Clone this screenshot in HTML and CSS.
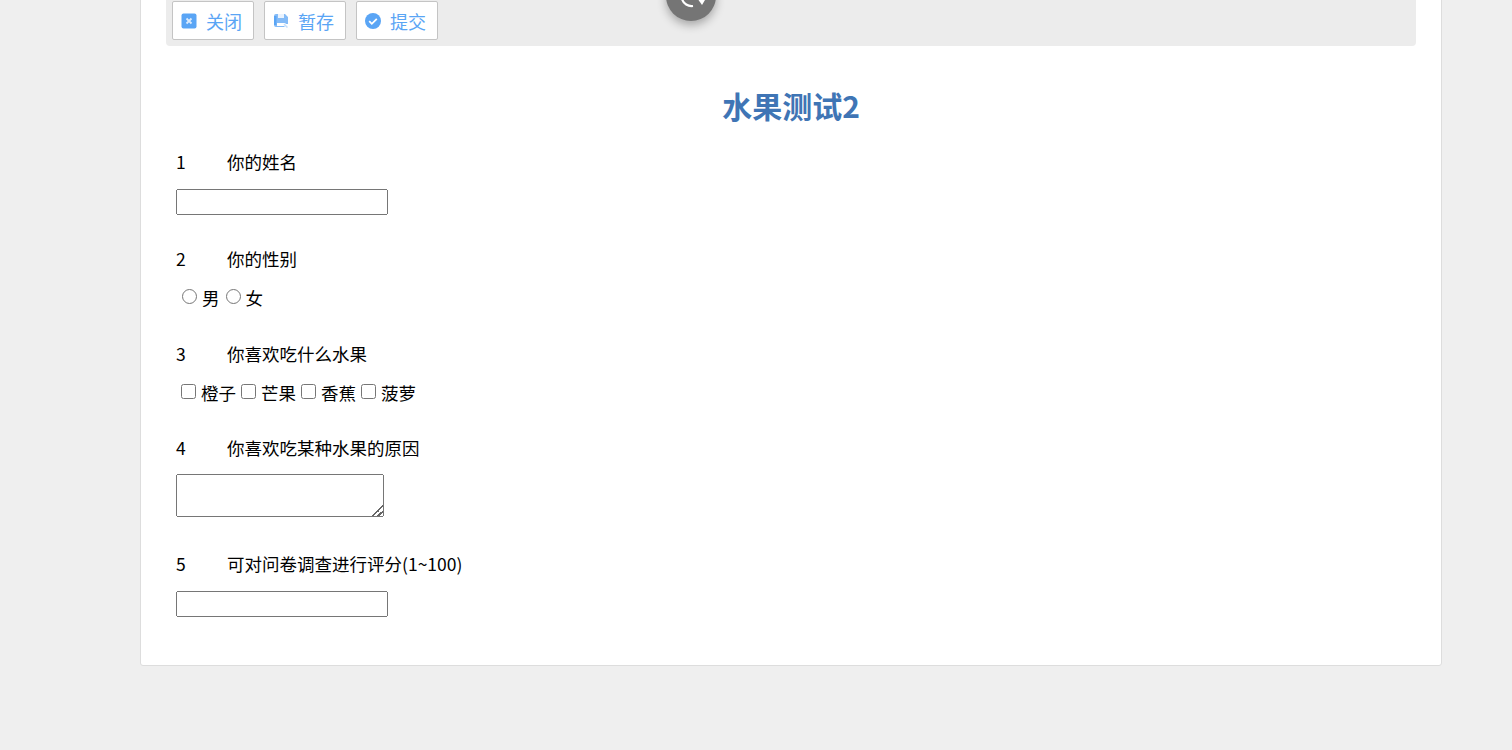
FILE: index.html
```html
<!DOCTYPE html>
<html>

<head>
  <title>水果测试2</title>
  <link rel="stylesheet" href="styles.css">
</head>

<body>
  <div class="formCard">
    <div class="toolbar">
      <button class="toolButton">
        <svg class="toolIcon" viewBox="0 0 16 16">
          <rect x="0.500" y="0.500" width="15" height="15" rx="2" fill="#5aa5f5" />
          <path d="M5.500 5.500l5 5M10.500 5.500l-5 5" stroke="#dcebfc" stroke-width="1.800" fill="none" />
        </svg>
        <span>关闭</span>
      </button>
      <button class="toolButton">
        <svg class="toolIcon" viewBox="0 0 16 16">
          <path d="M1 3a2 2 0 0 1 2-2h9l3 3v7h-2l-1-1H4v3h7l1 1H3a2 2 0 0 1-2-2z" fill="#84bbf7" />
          <rect x="5" y="1" width="6" height="4" fill="#eaf3fe" />
          <rect x="1" y="3" width="2.500" height="9" fill="#5aa5f5" />
          <path d="M11 11l3.500 3.500" stroke="#c5dffb" stroke-width="1.500" fill="none" />
        </svg>
        <span>暂存</span>
      </button>
      <button class="toolButton">
        <svg class="toolIcon" viewBox="0 0 16 16">
          <circle cx="8" cy="8" r="8" fill="#5aa5f5" />
          <path d="M4.200 8.200l2.600 2.600 5-5" stroke="#fff" stroke-width="1.800" fill="none" />
        </svg>
        <span>提交</span>
      </button>
    </div>
    <div class="floatButton">
      <svg viewBox="0 0 50 50" width="50" height="50">
        <path d="M16 28a10 10 0 0 0 11 7" stroke="#fff" stroke-width="2.200" fill="none" />
        <path d="M29 24h13l-6 10z" fill="#fff" />
      </svg>
    </div>

    <h1 class="formTitle">水果测试2</h1>

    <div class="question">
      <div class="questionLabel"><span class="num">1</span><span>你的姓名</span></div>
      <input class="textInput" type="text" />
    </div>

    <div class="question">
      <div class="questionLabel"><span class="num">2</span><span>你的性别</span></div>
      <div class="options">
        <label class="option"><input class="radioBox" type="radio" name="sex" />男</label>
        <label class="option"><input class="radioBox" type="radio" name="sex" />女</label>
      </div>
    </div>

    <div class="question">
      <div class="questionLabel"><span class="num">3</span><span>你喜欢吃什么水果</span></div>
      <div class="options checks">
        <label class="option"><input class="checkBox" type="checkbox" />橙子</label>
        <label class="option"><input class="checkBox" type="checkbox" />芒果</label>
        <label class="option"><input class="checkBox" type="checkbox" />香蕉</label>
        <label class="option"><input class="checkBox" type="checkbox" />菠萝</label>
      </div>
    </div>

    <div class="question areaQuestion">
      <div class="questionLabel areaLabel"><span class="num">4</span><span>你喜欢吃某种水果的原因</span></div>
      <textarea class="areaInput"></textarea>
    </div>

    <div class="question">
      <div class="questionLabel"><span class="num">5</span><span>可对问卷调查进行评分(1~100)</span></div>
      <input class="textInput" type="text" />
    </div>
  </div>
</body>

</html>
```

FILE: styles.css
```css
html,
body {
  height: 100%;
}

body {
  margin: 0;
  background: #efefef;
  overflow: hidden;
  color: #000;
  font-family: "Noto Sans CJK SC", "Open Sans", sans-serif;
}

.formCard {
  position: relative;
  box-sizing: border-box;
  width: 1302px;
  height: 766px;
  margin: -100px 0 0 140px;
  padding: 90px 25px 0 25px;
  background: #fff;
  border: 1px solid #ddd;
  border-radius: 3px;
}

.toolbar {
  display: flex;
  gap: 10px;
  height: 55px;
  padding: 10px 6px 0 6px;
  box-sizing: border-box;
  background: #ececec;
  border-radius: 0 0 4px 4px;
}

.toolButton {
  display: flex;
  align-items: center;
  gap: 9px;
  width: 82px;
  height: 39px;
  padding: 0 0 0 8px;
  box-sizing: border-box;
  background: #fff;
  border: 1px solid #c4c4c4;
  border-radius: 2px;
  color: #5aa5f5;
  font-family: inherit;
  font-size: 18px;
}

.toolIcon {
  width: 16px;
  height: 16px;
  flex: none;
}

.floatButton {
  position: absolute;
  top: 70px;
  left: 525px;
  width: 50px;
  height: 50px;
  border-radius: 50%;
  background: #757575;
  box-shadow: 0 4px 10px rgba(0, 0, 0, 0.3);
  overflow: hidden;
}

.formTitle {
  margin: 37px 0 23px 0;
  height: 44px;
  line-height: 44px;
  text-align: center;
  font-size: 30px;
  font-weight: 700;
  color: #3f75b5;
}

.question {
  padding: 0 10px;
  margin-bottom: 32px;
}

.areaQuestion {
  margin-bottom: 35px;
}

.questionLabel {
  display: flex;
  height: 26px;
  line-height: 24px;
  font-size: 17.5px;
  margin-top: 17px;
  margin-bottom: 13px;
}

.areaLabel {
  margin-bottom: 12px;
}

.num {
  width: 51px;
  flex: none;
}

.textInput {
  display: block;
  box-sizing: border-box;
  width: 212px;
  height: 26px;
  margin: 0;
}

.areaInput {
  display: block;
  box-sizing: border-box;
  width: 208px;
  height: 43px;
  margin: 0;
}

.areaInput::-webkit-resizer {
  background: linear-gradient(135deg, transparent 62%, #666 62%, #666 70%, transparent 70%, transparent 80%, #666 80%, #666 88%, transparent 88%);
}

.options {
  display: flex;
  gap: 6px;
  height: 24px;
  line-height: 24px;
  font-size: 17.5px;
  padding-left: 6px;
}

.checks {
  gap: 5px;
  height: 23px;
  line-height: 23px;
  padding-left: 5px;
}

.option {
  display: flex;
  align-items: center;
  gap: 5px;
}

.radioBox,
.checkBox {
  width: 15px;
  height: 15px;
  margin: 0 0 3px 0;
}
```
